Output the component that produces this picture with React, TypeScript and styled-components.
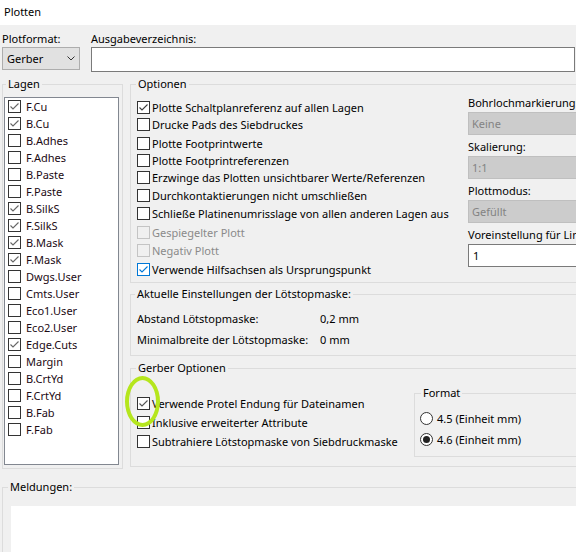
import React from "react";
import styled, { createGlobalStyle } from "styled-components";

const GlobalStyle = createGlobalStyle`
  html, body {
    margin: 0;
    padding: 0;
    background: #f0f0f0;
  }
  body {
    font-family: "Noto Sans", "Open Sans", sans-serif;
    font-size: 11px;
    color: #000;
  }
  * {
    box-sizing: border-box;
  }
`;

type Tone = "normal" | "disabled" | "focus";

const layers: [string, boolean][] = [
  ["F.Cu", true],
  ["B.Cu", true],
  ["B.Adhes", false],
  ["F.Adhes", false],
  ["B.Paste", false],
  ["F.Paste", false],
  ["B.SilkS", true],
  ["F.SilkS", true],
  ["B.Mask", true],
  ["F.Mask", true],
  ["Dwgs.User", false],
  ["Cmts.User", false],
  ["Eco1.User", false],
  ["Eco2.User", false],
  ["Edge.Cuts", true],
  ["Margin", false],
  ["B.CrtYd", false],
  ["F.CrtYd", false],
  ["B.Fab", false],
  ["F.Fab", false],
];

//* label, checked, tone, gap above
const options: [string, boolean, Tone, number][] = [
  ["Plotte Schaltplanreferenz auf allen Lagen", true, "normal", 0],
  ["Drucke Pads des Siebdruckes", false, "normal", 0],
  ["Plotte Footprintwerte", false, "normal", 2],
  ["Plotte Footprintreferenzen", false, "normal", 0],
  ["Erzwinge das Plotten unsichtbarer Werte/Referenzen", false, "normal", 0],
  ["Durchkontaktierungen nicht umschließen", false, "normal", 1],
  ["Schließe Platinenumrisslage von allen anderen Lagen aus", false, "normal", 1],
  ["Gespiegelter Plott", false, "disabled", 2],
  ["Negativ Plott", false, "disabled", 1],
  ["Verwende Hilfsachsen als Ursprungspunkt", true, "focus", 2],
];

const sideFields: [string, string, boolean][] = [
  ["Bohrlochmarkierung:", "Keine", true],
  ["Skalierung:", "1:1", true],
  ["Plottmodus:", "Gefüllt", true],
  ["Voreinstellung für Linienbreite:", "1", false],
];

const gerberOptions: [string, boolean][] = [
  ["Verwende Protel Endung für Dateinamen", true],
  ["Inklusive erweiterter Attribute", false],
  ["Subtrahiere Lötstopmaske von Siebdruckmaske", false],
];

function CheckBox({ checked, tone = "normal", mark = "#444" }: { checked: boolean; tone?: Tone; mark?: string }) {
  const color = tone === "focus" ? "#0078d7" : mark;
  return (
    <Box $tone={tone}>
      {checked && (
        <svg width="11" height="11" viewBox="0 0 11 11">
          <polyline points="1.5,5.5 4,8 9.5,2.5" fill="none" stroke={color} strokeWidth="1.1" />
        </svg>
      )}
    </Box>
  );
}

function App() {
  return (
    <Window>
      <GlobalStyle />
      <TitleBar>Plotten</TitleBar>

      <TopRow>
        <Field $width="78px">
          <FieldLabel>Plotformat:</FieldLabel>
          <Select>
            Gerber
            <svg width="8" height="5" viewBox="0 0 8 5">
              <polyline points="0.5,0.5 4,4 7.5,0.5" fill="none" stroke="#333" strokeWidth="1" />
            </svg>
          </Select>
        </Field>
        <Field $width="auto">
          <FieldLabel>Ausgabeverzeichnis:</FieldLabel>
          <TextInput />
        </Field>
      </TopRow>

      <MainRow>
        <LayersGroup>
          <Legend $indent={3}>Lagen</Legend>
          <LayerList>
            {layers.map(([name, on]) => (
              <LayerItem key={name}>
                <CheckBox checked={on} mark="#666" />
                <span>{name}</span>
              </LayerItem>
            ))}
          </LayerList>
        </LayersGroup>

        <RightColumn>
          <OptionsGroup>
            <Legend $indent={5}>Optionen</Legend>
            <OptionsGrid>
              <CheckColumn>
                {options.map(([label, on, tone, gap]) => (
                  <CheckRow key={label} $gap={gap}>
                    <CheckBox checked={on} tone={tone} mark="#3c3c3c" />
                    <CheckLabel $disabled={tone === "disabled"}>{label}</CheckLabel>
                  </CheckRow>
                ))}
              </CheckColumn>
              <SideColumn>
                {sideFields.map(([label, value, disabled]) => (
                  <SideField key={label}>
                    <FieldLabel>{label}</FieldLabel>
                    <ComboBox $disabled={disabled}>{value}</ComboBox>
                  </SideField>
                ))}
              </SideColumn>
            </OptionsGrid>
          </OptionsGroup>

          <MaskGroup>
            <Legend $indent={4}>Aktuelle Einstellungen der Lötstopmaske:</Legend>
            <ValueGrid>
              <span>Abstand Lötstopmaske:</span>
              <span>0,2 mm</span>
              <span>Minimalbreite der Lötstopmaske:</span>
              <span>0 mm</span>
            </ValueGrid>
          </MaskGroup>

          <GerberGroup>
            <Legend $indent={5}>Gerber Optionen</Legend>
            <GerberRow>
              <GerberChecks>
                {gerberOptions.map(([label, on], i) => (
                  <CheckRow key={label} $gap={i === 0 ? 0 : 2}>
                    <CheckBox checked={on} mark="#555" />
                    <CheckLabel>{label}</CheckLabel>
                  </CheckRow>
                ))}
              </GerberChecks>
              <FormatGroup>
                <Legend $indent={6}>Format</Legend>
                <RadioRow>
                  <RadioCircle $on={false} />
                  <span>4.5 (Einheit mm)</span>
                </RadioRow>
                <RadioRow>
                  <RadioCircle $on={true} />
                  <span>4.6 (Einheit mm)</span>
                </RadioRow>
              </FormatGroup>
            </GerberRow>
            <Highlight />
          </GerberGroup>
        </RightColumn>
      </MainRow>

      <MessagesGroup>
        <Legend $indent={5}>Meldungen:</Legend>
        <MessageArea />
      </MessagesGroup>
    </Window>
  );
}

const Window = styled.div`
  width: 576px;
  height: 552px;
  overflow: hidden;
  background: #f0f0f0;
  display: flex;
  flex-direction: column;
`;

const TitleBar = styled.div`
  flex: none;
  height: 25px;
  line-height: 23px;
  padding-left: 4px;
  background: #fff;
`;

const TopRow = styled.div`
  flex: none;
  display: flex;
  gap: 11px;
  padding: 6px 1px 0 2px;
`;

const Field = styled.div<{ $width: string }>`
  display: flex;
  flex-direction: column;
  width: ${(p) => p.$width};
  flex: ${(p) => (p.$width === "auto" ? "1" : "none")};
`;

const FieldLabel = styled.div`
  height: 16px;
  line-height: 16px;
  white-space: nowrap;
`;

const Select = styled.div`
  height: 23px;
  display: flex;
  align-items: center;
  justify-content: space-between;
  padding: 0 4px 0 4px;
  background: #e1e1e1;
  border: 1px solid #adadad;
`;

const TextInput = styled.div`
  height: 25px;
  background: #fff;
  border: 1px solid #7a7a7a;
`;

const MainRow = styled.div`
  flex: none;
  display: flex;
  gap: 7px;
  margin-top: 4px;
  padding-left: 2px;
`;

//* fieldsets keep no inline padding so the legend sits at its own indent
const Group = styled.fieldset`
  position: relative;
  margin: 0;
  min-width: 0;
  padding-left: 0;
  padding-right: 0;
  border: 1px solid #dcdcdc;
`;

const Legend = styled.legend<{ $indent: number }>`
  margin-left: ${(p) => p.$indent}px;
  padding: 0 2px;
  line-height: 16px;
  white-space: nowrap;
`;

const LayersGroup = styled(Group)`
  flex: none;
  width: 121px;
  padding-top: 5px;
  padding-bottom: 3px;
`;

const LayerList = styled.div`
  width: 115px;
  height: 368px;
  margin-left: 1px;
  background: #fff;
  border: 1px solid #828790;
  color: #1c0a14;
`;

const LayerItem = styled.div`
  height: 17px;
  display: flex;
  align-items: center;
  gap: 5px;
  padding-left: 3px;
`;

const Box = styled.span<{ $tone: Tone }>`
  flex: none;
  width: 13px;
  height: 13px;
  display: flex;
  align-items: center;
  justify-content: center;
  border: 1px solid ${(p) => (p.$tone === "focus" ? "#0078d7" : p.$tone === "disabled" ? "#c4c4c4" : "#333")};
  background: ${(p) => (p.$tone === "disabled" ? "transparent" : "#fff")};
`;

const RightColumn = styled.div`
  flex: none;
  width: 520px;
  display: flex;
  flex-direction: column;
`;

const OptionsGroup = styled(Group)`
  padding-top: 3px;
  padding-bottom: 4px;
`;

const OptionsGrid = styled.div`
  display: grid;
  grid-template-columns: 331px 1fr;
  padding-left: 6px;
`;

const CheckColumn = styled.div`
  display: flex;
  flex-direction: column;
  padding-top: 4px;
`;

const CheckRow = styled.div<{ $gap: number }>`
  height: 17px;
  margin-top: ${(p) => p.$gap}px;
  display: flex;
  align-items: center;
  gap: 2px;
  white-space: nowrap;
`;

const CheckLabel = styled.span<{ $disabled?: boolean }>`
  color: ${(p) => (p.$disabled ? "#8a8a8a" : "#000")};
`;

const SideColumn = styled.div`
  display: flex;
  flex-direction: column;
  gap: 4px;
`;

const SideField = styled.div`
  display: flex;
  flex-direction: column;
  gap: 1px;
`;

const ComboBox = styled.div<{ $disabled: boolean }>`
  width: 130px;
  height: 23px;
  line-height: 21px;
  padding-left: ${(p) => (p.$disabled ? 3 : 4)}px;
  background: ${(p) => (p.$disabled ? "#cccccc" : "#fff")};
  border: 1px solid ${(p) => (p.$disabled ? "#bfbfbf" : "#7a7a7a")};
  color: ${(p) => (p.$disabled ? "#838383" : "#000")};
`;

const MaskGroup = styled(Group)`
  margin-top: 3px;
  padding-top: 9px;
  padding-bottom: 7px;
`;

const ValueGrid = styled.div`
  display: grid;
  grid-template-columns: 183px auto;
  grid-auto-rows: 16px;
  row-gap: 5px;
  padding-left: 6px;
  line-height: 16px;
  white-space: nowrap;
`;

const GerberGroup = styled(Group)`
  margin-top: 4px;
  padding-top: 9px;
  padding-bottom: 9px;
`;

const GerberRow = styled.div`
  display: flex;
  align-items: flex-start;
  padding-left: 6px;
`;

const GerberChecks = styled.div`
  flex: none;
  width: 277px;
  margin-top: 10px;
  display: flex;
  flex-direction: column;
`;

const FormatGroup = styled(Group)`
  flex: none;
  width: 200px;
  padding-top: 9px;
  padding-bottom: 8px;
  display: flex;
  flex-direction: column;
  gap: 4px;
`;

const RadioRow = styled.div`
  height: 17px;
  display: flex;
  align-items: center;
  gap: 4px;
  padding-left: 5px;
  white-space: nowrap;
`;

const RadioCircle = styled.span<{ $on: boolean }>`
  flex: none;
  width: 13px;
  height: 13px;
  border-radius: 50%;
  border: 1px solid #333;
  background: #fff;
  display: flex;
  align-items: center;
  justify-content: center;

  &::after {
    content: "";
    display: ${(p) => (p.$on ? "block" : "none")};
    width: 7px;
    height: 7px;
    border-radius: 50%;
    background: #222;
  }
`;

//* hand-drawn annotation ring lying over the first Gerber checkbox
const Highlight = styled.span`
  position: absolute;
  left: -6px;
  top: 0;
  width: 35px;
  height: 51px;
  border-radius: 50%;
  border: 4px solid #b5e61d;
  pointer-events: none;
`;

const MessagesGroup = styled(Group)`
  flex: none;
  width: 600px;
  margin: 10px 0 0 2px;
  padding-top: 11px;
`;

const MessageArea = styled.div`
  height: 80px;
  margin-left: 8px;
  background: #fff;
`;

export default App;
